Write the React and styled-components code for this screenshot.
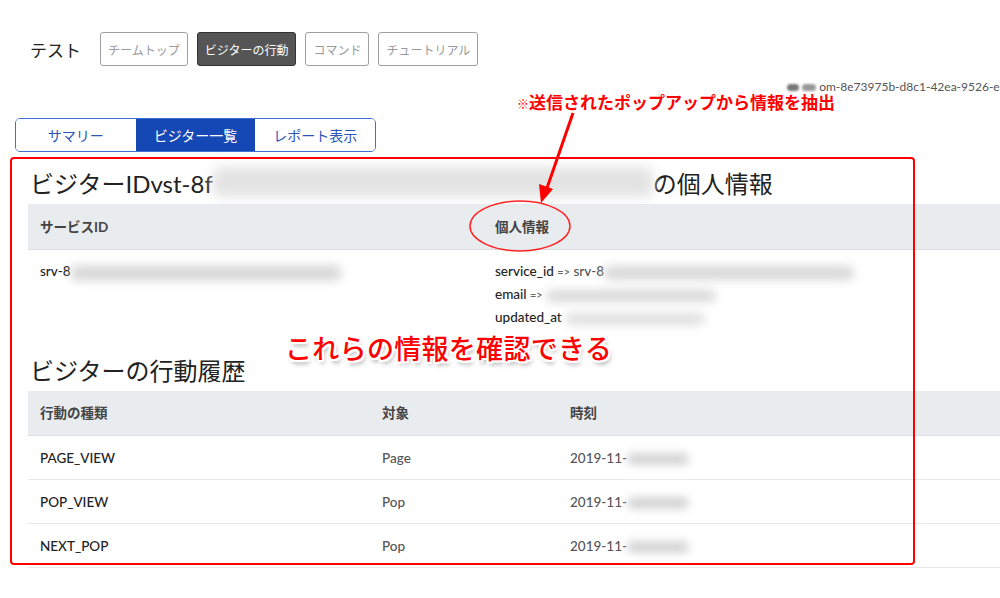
import React from "react"
import styled, { createGlobalStyle } from "styled-components"

const GlobalStyle = createGlobalStyle`
  html, body {
    margin: 0;
    padding: 0;
    background: #fff;
    overflow: hidden;
  }
  body {
    font-family: Lato, "Noto Sans CJK JP", sans-serif;
    color: #222;
  }
`

const Page = styled.div`
  position: relative;
  width: 1000px;
  height: 598px;
  overflow: hidden;
  padding: 32px 0 0 15px;
  box-sizing: border-box;
`

const Nav = styled.div`
  display: flex;
  align-items: center;
  gap: 9px;
  padding-left: 15px;
`
const NavTitle = styled.h1`
  margin: 0 10px 0 0;
  font-size: 17px;
  font-weight: 400;
  color: #222;
`
const NavButton = styled.button`
  height: 34px;
  padding: 0 7px;
  font-family: inherit;
  font-size: 12px;
  border-radius: 3px;
  border: 1px solid ${(p) => (p.$active ? "#333" : "#a0a0a0")};
  background: ${(p) => (p.$active ? "#555" : "#fff")};
  color: ${(p) => (p.$active ? "#fff" : "#999")};
`

const IdLine = styled.div`
  height: 20px;
  padding-left: 772px;
  margin-top: 13px;
  font-size: 12px;
  color: #555;
  white-space: nowrap;
`

const Tabs = styled.div`
  display: flex;
  width: 361px;
  height: 34px;
  margin-top: 19px;
  border: 1px solid #3d6fd6;
  border-radius: 5px;
  overflow: hidden;
  box-sizing: border-box;
`
const Tab = styled.div`
  flex: 1;
  display: flex;
  align-items: center;
  justify-content: center;
  font-size: 14px;
  background: ${(p) => (p.$active ? "#1547b5" : "#fff")};
  color: ${(p) => (p.$active ? "#fff" : "#2b56b8")};
`

const Content = styled.div`
  padding: 12px 0 0 13px;
`

const Heading = styled.h2`
  margin: 0 0 4px;
  height: 36px;
  display: flex;
  align-items: center;
  font-size: 24px;
  font-weight: 400;
  color: #222;
  padding-left: 2px;
  white-space: nowrap;
`

const Table = styled.div`
  width: 972px;
  margin-bottom: 18px;
`
const Row = styled.div`
  display: grid;
  grid-template-columns: ${(p) => p.$cols};
  align-items: ${(p) => (p.$top ? "start" : "center")};
  min-height: ${(p) => p.$h || 44}px;
  background: ${(p) => (p.$head ? "#e9ecef" : "#fff")};
  border-bottom: 1px solid ${(p) => (p.$head ? "#dcdfe3" : p.$plain ? "transparent" : "#e9e9e9")};
  font-size: 13.5px;
  font-weight: ${(p) => (p.$head ? 700 : 500)};
  color: ${(p) => (p.$head ? "#444" : "#222")};
  box-sizing: border-box;
`
const Cell = styled.div`
  padding: ${(p) => (p.$top ? "12px 12px 0" : "0 12px")};
  line-height: 18px;
  color: ${(p) => (p.$muted ? "#555" : "inherit")};
  white-space: nowrap;
`
const Lines = styled.div`
  padding: 12px 12px 6px;
  display: flex;
  flex-direction: column;
  gap: 4px;
  line-height: 18px;
`
const Arrow = styled.span`
  color: #666;
  font-size: 11px;
`
const Muted = styled.span`
  color: #555;
`

const Blur = styled.span`
  display: inline-block;
  vertical-align: middle;
  width: ${(p) => p.$w}px;
  height: ${(p) => p.$h || 14}px;
  background: ${(p) => p.$c || "#d9d9d9"};
  filter: blur(${(p) => p.$b || 5}px);
  border-radius: 6px;
`

const RedBox = styled.div`
  position: absolute;
  left: 10px;
  top: 157px;
  width: 905px;
  height: 408px;
  border: 2px solid #ff0000;
  border-radius: 4px;
  box-sizing: border-box;
  pointer-events: none;
`
const Overlay = styled.svg`
  position: absolute;
  left: 0;
  top: 0;
  pointer-events: none;
`
const Note = styled.div`
  position: absolute;
  left: 517px;
  top: 89px;
  font-size: 17px;
  font-weight: 700;
  color: #f00;
  white-space: nowrap;
  span {
    font-size: 12px;
  }
`
const BigNote = styled.div`
  position: absolute;
  left: 285px;
  top: 328px;
  font-size: 27px;
  font-weight: 500;
  letter-spacing: 0.3px;
  color: #f00;
  white-space: nowrap;
  text-shadow: 2px 0 0 #fff, -2px 0 0 #fff, 0 2px 0 #fff, 0 -2px 0 #fff,
    2px 2px 0 #fff, -2px -2px 0 #fff, 2px -2px 0 #fff, -2px 2px 0 #fff,
    2px 4px 4px rgba(0, 0, 0, 0.35);
`

const actions = [
  ["PAGE_VIEW", "Page"],
  ["POP_VIEW", "Pop"],
  ["NEXT_POP", "Pop"],
]

export default function App() {
  return (
    <Page>
      <GlobalStyle />
      <Nav>
        <NavTitle>テスト</NavTitle>
        <NavButton>チームトップ</NavButton>
        <NavButton $active>ビジターの行動</NavButton>
        <NavButton>コマンド</NavButton>
        <NavButton>チュートリアル</NavButton>
      </Nav>

      <IdLine>
        <Blur $w={12} $h={7} $c="#777" $b={1} />{"   "}
        <Blur $w={14} $h={7} $c="#999" $b={1} />
        {" "}om-8e73975b-d8c1-42ea-9526-e
      </IdLine>

      <Tabs>
        <Tab>サマリー</Tab>
        <Tab $active>ビジター一覧</Tab>
        <Tab>レポート表示</Tab>
      </Tabs>

      <Content>
        <Heading>
          ビジターIDvst-8f
          <Blur $w={440} $h={30} $c="#e3e3e3" $b={6} />
          の個人情報
        </Heading>
        <Table>
          <Row $head $cols="455px 1fr" $h={46}>
            <Cell>サービスID</Cell>
            <Cell>個人情報</Cell>
          </Row>
          <Row $cols="455px 1fr" $top $plain $h={80}>
            <Cell $top>
              srv-8<Blur $w={270} $h={16} />
            </Cell>
            <Lines>
              <div>
                service_id <Arrow>=&gt;</Arrow> <Muted>srv-8</Muted>
                <Blur $w={250} $h={14} />
              </div>
              <div>
                email <Arrow>=&gt;</Arrow> <Blur $w={170} $h={12} />
              </div>
              <div>
                updated_at <Blur $w={140} $h={12} $c="#e0e0e0" />
              </div>
            </Lines>
          </Row>
        </Table>

        <Heading>ビジターの行動履歴</Heading>
        <Table>
          <Row $head $cols="342px 188px 1fr" $h={45}>
            <Cell>行動の種類</Cell>
            <Cell>対象</Cell>
            <Cell>時刻</Cell>
          </Row>
          {actions.map(([kind, target]) => (
            <Row key={kind} $cols="342px 188px 1fr" $h={44}>
              <Cell>{kind}</Cell>
              <Cell $muted>{target}</Cell>
              <Cell $muted>
                2019-11-<Blur $w={62} $h={12} $c="#d4d4d4" $b={4} />
              </Cell>
            </Row>
          ))}
        </Table>
      </Content>

      <RedBox />
      <Note>
        <span>※</span>送信されたポップアップから情報を抽出
      </Note>
      <Overlay width="1000" height="598" viewBox="0 0 1000 598">
        <ellipse cx="520" cy="226" rx="50" ry="25" fill="none" stroke="#f22" strokeWidth="1.5" />
        <line x1="573" y1="113" x2="547" y2="188" stroke="#f00" strokeWidth="3" />
        <polygon points="541,203 539,184 553,189" fill="#f00" />
      </Overlay>
      <BigNote>これらの情報を確認できる</BigNote>
    </Page>
  )
}
